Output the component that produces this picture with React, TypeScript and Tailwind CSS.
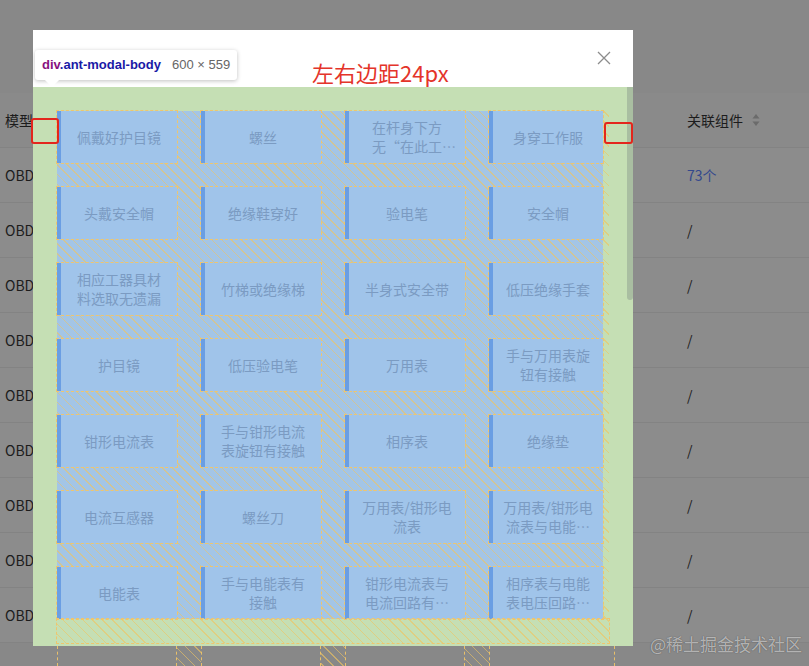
import React from "react";

const rows: string[][] = [
  ["佩戴好护目镜", "螺丝", "在杆身下方无“在此工作”标示牌", "身穿工作服"],
  ["头戴安全帽", "绝缘鞋穿好", "验电笔", "安全帽"],
  ["相应工器具材料选取无遗漏", "竹梯或绝缘梯", "半身式安全带", "低压绝缘手套"],
  ["护目镜", "低压验电笔", "万用表", "手与万用表旋钮有接触"],
  ["钳形电流表", "手与钳形电流表旋钮有接触", "相序表", "绝缘垫"],
  ["电流互感器", "螺丝刀", "万用表/钳形电流表", "万用表/钳形电流表与电能表连接"],
  ["电能表", "手与电能表有接触", "钳形电流表与电流回路有接触", "相序表与电能表电压回路有接触"],
];

const hatch =
  "bg-[image:repeating-linear-gradient(45deg,transparent_0_6px,rgba(240,196,96,0.6)_6px_7px)]";

const tableRows = ["73个", "/", "/", "/", "/", "/", "/", "/", "/"];

function Item({ text }: { text: string }) {
  return (
    <div className="flex h-[52px] items-center justify-center border-l-4 border-[#6a9ee3] bg-[#a0c4ea] px-[10px] outline-1 outline-dashed outline-[#efc56e]">
      <span className="line-clamp-2 text-center text-[14px] leading-[19px] text-[#7b9bc2]">{text}</span>
    </div>
  );
}

export default function App() {
  return (
    <div className="relative h-[666px] w-[809px] overflow-hidden bg-[#888888] font-['Noto_Sans_CJK_SC',sans-serif]">
      {/* page behind the mask */}
      <div className="h-[93px]" />
      <div className="flex h-[55px] items-center border-b border-[#838383] bg-[#8a8a8a] text-[14px] text-[#1c1c1c]">
        <div className="w-[687px] pl-[5px]">模型</div>
        <div className="flex items-center gap-[9px]">
          <span>关联组件</span>
          <svg width="8" height="14" viewBox="0 0 8 14" className="text-[#6b6b6b]">
            <path d="M4 1 L7.5 5.5 H0.5 Z M4 13 L7.5 8.5 H0.5 Z" fill="currentColor" />
          </svg>
        </div>
      </div>
      {tableRows.map((v, i) => (
        <div key={i} className="flex h-[55px] items-center border-b border-[#838383] bg-[#8c8c8c] text-[14px] text-[#1c1c1c]">
          <div className="w-[687px] pl-[5px]">OBD</div>
          <div className={i === 0 ? "text-[#33488c]" : ""}>{v}</div>
        </div>
      ))}

      {/* modal */}
      <div className="absolute left-[33px] top-[30px] w-[600px]">
        <div className="relative h-[57px] bg-white">
          <svg className="absolute right-[22px] top-[21px]" width="14" height="14" viewBox="0 0 14 14">
            <path d="M1 1 L13 13 M13 1 L1 13" stroke="#8c8c8c" strokeWidth="1.3" />
          </svg>
        </div>
        <div className="relative h-[559px] overflow-hidden bg-[#c5dfb4] pl-[24px] pt-[24px]">
          <div className={`w-[552px] ${hatch}`}>
            <div className={`grid w-[546px] grid-cols-[120px_120px_120px_114px] gap-[24px] bg-[#a3c5e6] ${hatch}`}>
              {rows.flat().map((t, i) => (
                <Item key={i} text={t} />
              ))}
            </div>
            <div className="h-[24px] outline-1 outline-dashed outline-[#efc56e]" />
          </div>
          <div className="absolute right-0 top-0 h-[213px] w-[6px] rounded-b-[3px] bg-[#a9bea1]" />
        </div>
      </div>

      {/* devtools grid lines spilling below the modal */}
      <div className={`absolute left-[57px] top-[646px] grid h-[20px] w-[552px] grid-cols-[120px_120px_120px_126px] gap-[24px] ${hatch}`}>
        {[0, 1, 2, 3].map((i) => (
          <div key={i} className="border-x border-dashed border-[#e9c06a] bg-[#888888]" />
        ))}
      </div>

      {/* devtools tooltip */}
      <div className="absolute left-[35px] top-[50px] flex h-[30px] items-center gap-[11px] rounded-[3px] bg-white px-[7px] font-['Liberation_Sans',sans-serif] text-[13px] shadow-[0_1px_4px_rgba(0,0,0,0.25)]">
        <span className="font-bold">
          <span className="text-[#881280]">div</span>
          <span className="text-[#1a1aa6]">.ant-modal-body</span>
        </span>
        <span className="text-[#666666]">600 × 559</span>
        <div className="absolute bottom-[-5px] left-[12px] h-[10px] w-[10px] rotate-45 bg-white" />
      </div>

      {/* annotations */}
      <div className="absolute left-[312px] top-[57px] text-[22px] leading-[30px] text-[#e4342a]">左右边距24px</div>
      <div className="absolute left-[31px] top-[118px] h-[26px] w-[28px] rounded-[3px] border-2 border-[#e3261d]" />
      <div className="absolute left-[604px] top-[122px] h-[22px] w-[29px] rounded-[3px] border-2 border-[#e3261d]" />

      <div className="absolute left-[650px] top-[630px] text-[17px] leading-[28px] text-white/60 [text-shadow:0_0_1px_rgba(0,0,0,0.6)]">
        @稀土掘金技术社区
      </div>
    </div>
  );
}
